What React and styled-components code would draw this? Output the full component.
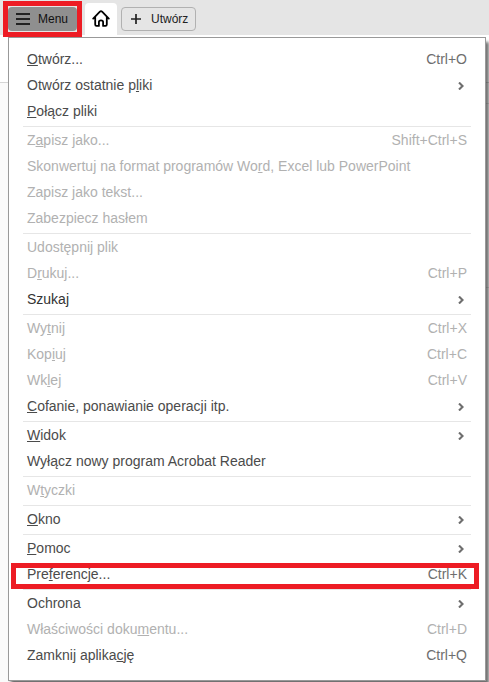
import { Fragment } from "react";
import styled, { createGlobalStyle } from "styled-components";

const groups = [
    [
        { label: "_Otwórz...", keys: "Ctrl+O" },
        { label: "Otwórz ostatnie p_liki", submenu: true },
        { label: "_Połącz pliki" },
    ],
    [
        { label: "Z_apisz jako...", keys: "Shift+Ctrl+S", disabled: true },
        { label: "Skonwertuj na format programów Wo_rd, Excel lub PowerPoint", disabled: true },
        { label: "Zapisz jako tekst...", disabled: true },
        { label: "Zabezpiecz hasłem", disabled: true },
    ],
    [
        { label: "Udostępnij plik", disabled: true },
        { label: "D_rukuj...", keys: "Ctrl+P", disabled: true },
        { label: "Szukaj", submenu: true, strong: true },
    ],
    [
        { label: "Wy_tnij", keys: "Ctrl+X", disabled: true },
        { label: "Kop_iuj", keys: "Ctrl+C", disabled: true },
        { label: "Wk_lej", keys: "Ctrl+V", disabled: true },
        { label: "_Cofanie, ponawianie operacji itp.", submenu: true },
    ],
    [
        { label: "_Widok", submenu: true },
        { label: "Wyłącz nowy program Acrobat Reader" },
    ],
    [{ label: "W_tyczki", disabled: true }],
    [{ label: "_Okno", submenu: true }],
    [
        { label: "_Pomoc", submenu: true },
        { label: "Pre_ferencje...", keys: "Ctrl+K", marked: true },
    ],
    [
        { label: "Ochrona", submenu: true },
        { label: "Właściwości doku_mentu...", keys: "Ctrl+D", disabled: true },
        { label: "Zamknij aplika_cję", keys: "Ctrl+Q" },
    ],
];

// the letter after "_" is the access key
function Label({ text }) {
    const i = text.indexOf("_");
    if (i < 0) return <span>{text}</span>;
    return (
        <span>
            {text.slice(0, i)}
            <u>{text[i + 1]}</u>
            {text.slice(i + 2)}
        </span>
    );
}

function MenuItem({ label, keys, submenu, disabled, strong, marked }) {
    return (
        <Item $disabled={disabled} $strong={strong}>
            <Label text={label} />
            {keys && <Keys $disabled={disabled}>{keys}</Keys>}
            {submenu && (
                <Chevron viewBox="0 0 6 8">
                    <path d="M1 0.5 L4.5 4 L1 7.5" />
                </Chevron>
            )}
            {marked && <ItemMark />}
        </Item>
    );
}

export default function App() {
    return (
        <Page>
            <GlobalStyle />
            <TopBar>
                <MenuButton>
                    <svg width="14" height="12" viewBox="0 0 14 12">
                        <path d="M0 1h14M0 6h14M0 11h14" stroke="#222" strokeWidth="1.8" />
                    </svg>
                    Menu
                    <ButtonMark />
                </MenuButton>
                <HomeTab>
                    <svg width="18" height="17" viewBox="0 0 18 17">
                        <path
                            d="M1.2 8.6 L7.9 1.7 Q9 0.7 10.1 1.7 L16.8 8.6 M3.2 7.2 V14.6 Q3.2 15.9 4.5 15.9 H6.9 V12 Q6.9 10.4 9 10.4 Q11.1 10.4 11.1 12 V15.9 H13.5 Q14.8 15.9 14.8 14.6 V7.2"
                            fill="none"
                            stroke="#000"
                            strokeWidth="1.8"
                            strokeLinecap="round"
                            strokeLinejoin="round"
                        />
                    </svg>
                </HomeTab>
                <CreateButton>
                    <svg width="10" height="10" viewBox="0 0 10 10">
                        <path d="M5 0v10M0 5h10" stroke="#222" strokeWidth="1.7" />
                    </svg>
                    Utwórz
                </CreateButton>
            </TopBar>
            <Toolbar />
            <Content>
                <ContentRow $height={21} />
                <ContentRow $height={184} />
            </Content>
            <Menu>
                {groups.map((items, i) => (
                    <Fragment key={i}>
                        {i > 0 && <Separator />}
                        {items.map((item) => (
                            <MenuItem key={item.label} {...item} />
                        ))}
                    </Fragment>
                ))}
            </Menu>
        </Page>
    );
}

const GlobalStyle = createGlobalStyle`
    * {
        box-sizing: border-box;
    }

    body {
        margin: 0;
        font-family: "Liberation Sans", Arial, sans-serif;
    }
`

const Page = styled.div`
    position: relative;
    display: flex;
    flex-direction: column;
    width: 489px;
    height: 682px;
    overflow: hidden;
    background: #fff;
`

const TopBar = styled.div`
    display: flex;
    align-items: flex-start;
    height: 35px;
    padding-left: 8px;
    background: #e5e5e5;
`

const MenuButton = styled.div`
    position: relative;
    display: flex;
    align-items: center;
    gap: 8px;
    width: 69px;
    height: 24px;
    margin-top: 7px;
    padding-left: 8px;
    border-radius: 4px;
    background: #8f8f8f;
    color: #111;
    font-size: 12px;
`

const HomeTab = styled.div`
    display: flex;
    justify-content: center;
    width: 32px;
    height: 32px;
    margin: 3px 4px 0 8px;
    padding-top: 7px;
    border-radius: 4px 4px 0 0;
    background: #fff;
`

const CreateButton = styled.div`
    display: flex;
    align-items: center;
    gap: 10px;
    width: 75px;
    height: 24px;
    margin-top: 7px;
    padding-left: 9px;
    border: 1px solid #b1b1b1;
    border-radius: 4px;
    color: #222;
    font-size: 12px;
`

const Toolbar = styled.div`
    height: 47px;
    background: #fff;
`

const Content = styled.div`
    flex: 1;
    border-top: 1px solid #d5d5d5;
    background: #fafafa;
`

const ContentRow = styled.div`
    height: ${({ $height }) => $height}px;
    margin-left: 300px;
    border-bottom: 1px solid #e0e0e0;
`

const Menu = styled.div`
    position: absolute;
    left: 8px;
    top: 37px;
    width: 478px;
    height: 644px;
    padding: 8px 14px 0;
    border: 1px solid #999;
    background: #fff;
    box-shadow: 3px 5px 3px rgba(0, 0, 0, 0.55);
`

const Item = styled.div`
    position: relative;
    display: flex;
    align-items: center;
    justify-content: space-between;
    height: 26px;
    padding: 0 4px;
    color: ${({ $disabled, $strong }) => ($disabled ? "#b1b1b1" : $strong ? "#333" : "#4b4b4b")};
    font-size: 14px;
    line-height: 26px;
    white-space: pre;

    u {
        text-decoration-thickness: 1px;
        text-decoration-skip-ink: none;
        text-underline-offset: 1px;
    }
`

const Keys = styled.span`
    color: ${({ $disabled }) => ($disabled ? "#b1b1b1" : "#6e6e6e")};
`

const Chevron = styled.svg`
    width: 6px;
    height: 8px;
    margin: 2px 3px 0 0;

    path {
        fill: none;
        stroke: #6e6e6e;
        stroke-width: 2.1;
    }
`

const Separator = styled.div`
    height: 3px;
    border-bottom: 1px solid #e6e6e6;
`

const Mark = styled.div`
    position: absolute;
    border: 5px solid #ed1c24;
`

const ButtonMark = styled(Mark)`
    top: -6px;
    right: -5px;
    bottom: -6px;
    left: -5px;
`

const ItemMark = styled(Mark)`
    top: 2px;
    left: -12px;
    width: 468px;
    height: 26px;
    z-index: 1;
`
